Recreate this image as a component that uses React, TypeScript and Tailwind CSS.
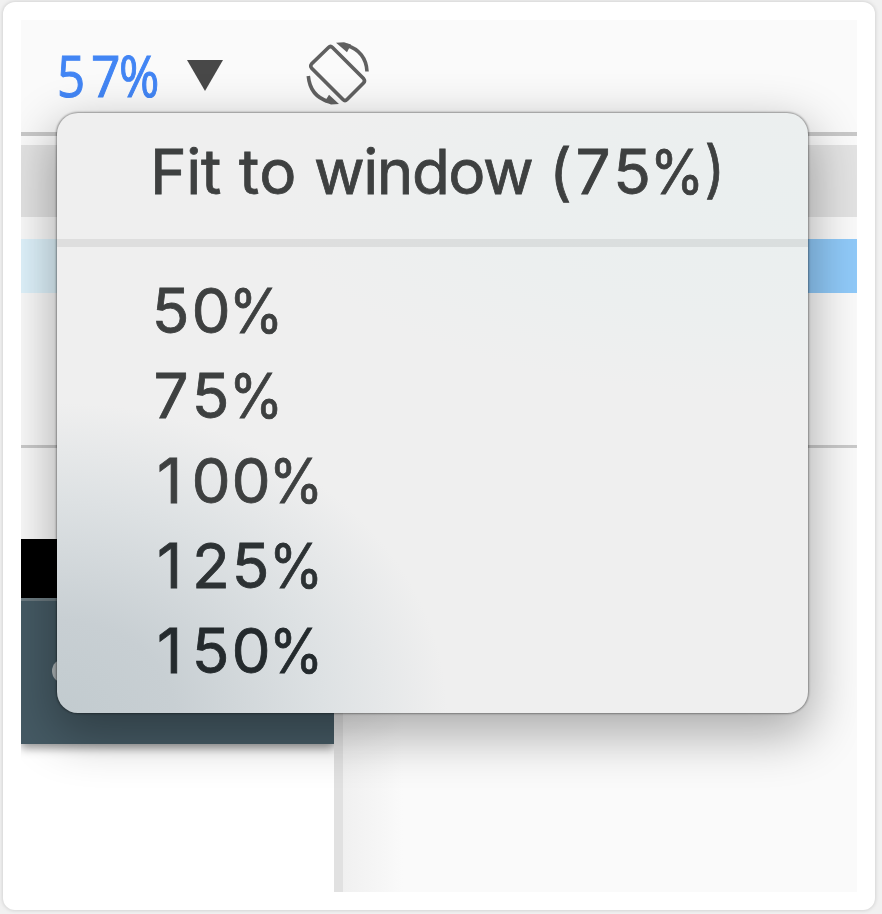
const zoomLevels = ["50", "75", "100", "125", "150"];

function RotateIcon() {
  return (
    <svg className="ml-[81px] mt-5 h-[66px] w-[66px] shrink-0" viewBox="305 40 66 66" fill="none" stroke="#606060" strokeWidth="3.6">
      <path d="M329.500 47.500Q331.500 45.500 333.500 47.500L364.500 78.500Q366.500 81 364.500 83L348 99.500Q346 101.500 344 99.500L312.500 68Q311 66 312.500 64Z" />
      <path d="M348 45.500C360 49 367.500 58.500 368 71.500M309.300 76C310.500 89.500 317.500 98 329.500 101.500" />
      <path d="M337 42.700L345 42.200L352 44.500L348 52.300ZM340 104L332 104.500L325.500 102L330 94.800Z" fill="#606060" stroke="none" />
    </svg>
  );
}

function Percent({ suffix = "" }: { suffix?: string }) {
  return <span className="inline-block origin-left scale-x-[0.89] tracking-normal">%{suffix}</span>;
}

function LevelDigits({ value }: { value: string }) {
  if (!value.startsWith("1")) return <span>{value}</span>;
  return (
    <>
      <span className="w-[40px] shrink-0 pl-[6px] proportional-nums">1</span>
      <span>{value.slice(1)}</span>
    </>
  );
}

function ZoomMenu() {
  return (
    <div className="absolute left-[36px] top-[93px] flex h-[600px] w-[751px] flex-col rounded-[21px] bg-[#efefef] bg-[radial-gradient(ellipse_390px_310px_at_0%_100%,#c2cbcf_0%,#c8cfd3_30%,#dde1e3_68%,#efefef00_100%),radial-gradient(ellipse_530px_190px_at_100%_16%,#eaefef_0%,#ecefef_60%,#efefef00_100%)] pt-[16px] font-[Inter,sans-serif] text-[62px] leading-[85px] tabular-nums text-[#3e4040] [-webkit-text-stroke:0.8px_currentColor] shadow-[0_0_2px_1px_rgba(0,0,0,0.36),0_18px_50px_5px_rgba(0,0,0,0.31)]">
      <div className="flex h-[85px] whitespace-pre pl-[93px]">
        <span className="w-[89px] tracking-[-0.300px]">Fit </span>
        <span className="w-[75px] tracking-[0.5px]">to </span>
        <span className="w-[234px] tracking-[-1.500px]">window </span>
        <span className="w-[25px]">(</span>
        <span className="w-[77px] tracking-[-0.700px]">75</span>
        <Percent suffix=")" />
      </div>
      <div className="mt-[25px] h-2 shrink-0 bg-black/7" />
      <div className="mt-[21px] flex flex-col pl-[94px]">
        {zoomLevels.map((level) => (
          <div key={level} className="flex h-[85px] tracking-[-0.200px] last:text-[#242a2d] nth-4:text-[#2d3234]">
            <LevelDigits value={level} /><span className="-ml-[2px]"><Percent /></span>
          </div>
        ))}
      </div>
    </div>
  );
}

export default function App() {
  return (
    <main className="h-[914px] w-[882px] overflow-hidden bg-[#f1f1f1] pl-[3px] pt-[2px]">
      <section className="h-[908px] w-[872px] rounded-xl bg-white p-[18px] shadow-[0_0_4px_rgba(0,0,0,0.18)]">
        <div className="relative flex h-[872px] w-[836px] flex-col overflow-hidden bg-[#fafafa]">
          <header className="flex h-[112px] shrink-0 items-start">
            <div className="mt-[13px] flex w-[104px] shrink-0 pl-[36px] font-['Open_Sans',sans-serif] text-[56px] leading-[84px] text-[#4285f4] [-webkit-text-stroke:1px_currentColor]">
              <span className="w-[34px] shrink-0 origin-left scale-x-[0.88]">5</span>
              <span className="w-[28px] shrink-0 origin-left scale-x-[0.92]">7</span>
              <span className="shrink-0 origin-left scale-x-[0.87]">%</span>
            </div>
            <svg className="ml-[62px] mt-10 h-[31px] w-[36px] shrink-0" viewBox="0 0 36 31"><path d="M0 0H36L18 31Z" fill="#484848" /></svg>
            <RotateIcon />
          </header>
          <div className="h-1 shrink-0 bg-[#c8c8c8]" />
          <div className="mt-[9px] h-[72px] shrink-0 bg-[#e3e3e3]" />
          <div className="mt-[22px] flex h-[54px] shrink-0">
            <div className="w-1/2 bg-[#dff3fc]" />
            <div className="w-1/2 bg-[#90caf9]" />
          </div>
          <div className="mt-[152px] h-[3px] shrink-0 bg-[#cacaca]" />
          <div className="flex min-h-0 flex-1">
            <div className="flex w-[313px] shrink-0 flex-col">
              <div className="mt-[91px] h-[59px] shrink-0 bg-black" />
              <div className="h-[3px] shrink-0 bg-[#718087]" />
              <div className="flex-1 bg-white">
                <div className="h-[143px] bg-[#455a64] pl-[31px] pt-[58px] shadow-[0_4px_9px_rgba(0,0,0,0.42)]">
                  <div className="h-6 w-6 rounded-full bg-[#aeb5b8]" />
                </div>
              </div>
            </div>
            <div className="z-0 mt-[91px] w-[9px] shrink-0 bg-[#e1e1e1]" />
            <div className="mt-[91px] w-[60px] bg-linear-to-r from-[#f0f0f0] to-[#fafafa]" />
          </div>
          <ZoomMenu />
        </div>
      </section>
    </main>
  );
}
